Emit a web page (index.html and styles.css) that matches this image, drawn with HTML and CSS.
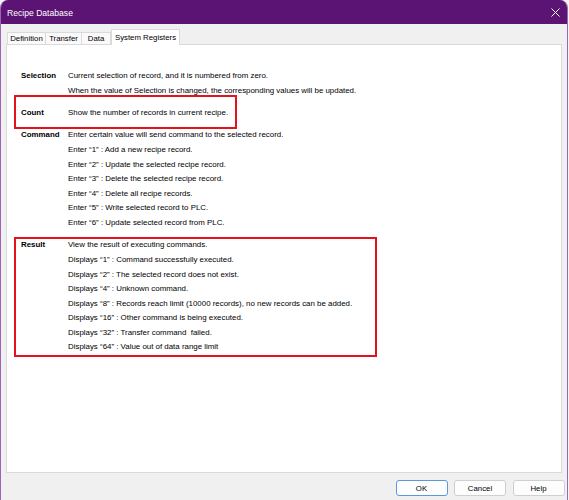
FILE: index.html
```html
<!DOCTYPE html>
<html lang="en">
<head>
    <meta charset="UTF-8">
    <meta name="viewport" content="width=device-width, initial-scale=1.0">
    <title>Recipe Database</title>
    <link rel="stylesheet" href="styles.css">
</head>
<body>
    <div class="window">
        <div class="titlebar">
            <span class="title">Recipe Database</span>
            <span class="close">
                <svg width="9" height="9" viewBox="0 0 9 9">
                    <path d="M0.5 0.5 L8.5 8.5 M8.5 0.5 L0.5 8.5" stroke="#fff" stroke-width="1" fill="none"/>
                </svg>
            </span>
        </div>

        <div class="tabs">
            <div class="tab tab-def">Definition</div>
            <div class="tab tab-transfer">Transfer</div>
            <div class="tab tab-data">Data</div>
            <div class="tab tab-active">System Registers</div>
        </div>

        <div class="panel">
            <div class="reg">
                <div class="reg-name">Selection</div>
                <div class="reg-desc">
                    <p>Current selection of record, and it is numbered from zero.</p>
                    <p>When the value of Selection is changed, the corresponding values will be updated.</p>
                </div>
            </div>

            <div class="reg marked mark-count">
                <div class="reg-name">Count</div>
                <div class="reg-desc">
                    <p>Show the number of records in current recipe.</p>
                </div>
            </div>

            <div class="reg">
                <div class="reg-name">Command</div>
                <div class="reg-desc">
                    <p>Enter certain value will send command to the selected record.</p>
                    <p>Enter “1” : Add a new recipe record.</p>
                    <p>Enter “2” : Update the selected recipe record.</p>
                    <p>Enter “3” : Delete the selected recipe record.</p>
                    <p>Enter “4” : Delete all recipe records.</p>
                    <p>Enter “5” : Write selected record to PLC.</p>
                    <p>Enter “6” : Update selected record from PLC.</p>
                </div>
            </div>

            <div class="reg marked mark-result">
                <div class="reg-name">Result</div>
                <div class="reg-desc">
                    <p>View the result of executing commands.</p>
                    <p>Displays “1” : Command successfully executed.</p>
                    <p>Displays “2” : The selected record does not exist.</p>
                    <p>Displays “4” : Unknown command.</p>
                    <p>Displays “8” : Records reach limit (10000 records), no new records can be added.</p>
                    <p>Displays “16” : Other command is being executed.</p>
                    <p>Displays “32” : Transfer command &nbsp;failed.</p>
                    <p>Displays “64” : Value out of data range limit</p>
                </div>
            </div>
        </div>

        <div class="buttons">
            <button class="btn btn-default">OK</button>
            <button class="btn">Cancel</button>
            <button class="btn">Help</button>
        </div>
    </div>
</body>
</html>
```

FILE: styles.css
```css
*, *::before, *::after {
    box-sizing: border-box;
}
body {
    margin: 0;
    background-color: #f4f4f4;
    font-family: "Liberation Sans", Arial, sans-serif;
    font-size: 7.9px;
    color: #000;
}
.window {
    width: 568px;
    height: 500px;
    background-color: #f0f0f0;
    border-left: 1px solid #9c64b2;
    border-right: 1px solid #9c64b2;
    border-radius: 8px 8px 0 0;
    overflow: hidden;
}
.titlebar {
    height: 24px;
    background-color: #5b1374;
    color: #fff;
    display: flex;
    align-items: center;
    padding: 2px 7px 0 6px;
}
.title {
    font-size: 8.6px;
}
.close {
    margin-left: auto;
    display: flex;
    margin-top: -1px;
}
.tabs {
    display: flex;
    align-items: flex-end;
    height: 15px;
    margin-top: 5px;
    padding-left: 6px;
    position: relative;
    z-index: 1;
}
.tab {
    height: 12px;
    line-height: 11px;
    text-align: center;
    background-color: #fafafa;
    border: 1px solid #dadada;
    border-bottom: none;
    font-size: 7.8px;
}
.tab-def {
    width: 39px;
}
.tab-transfer {
    width: 37px;
    margin-left: -1px;
}
.tab-data {
    width: 30px;
    margin-left: -1px;
}
.tab-active {
    width: 69px;
    height: 16px;
    line-height: 15px;
    margin-bottom: -1px;
    background-color: #fff;
}
.panel {
    height: 429px;
    margin: 0 5px 0 5px;
    background-color: #fff;
    border: 1px solid #dadada;
    padding: 24px 0 0 14px;
}
.reg {
    display: grid;
    grid-template-columns: 47px 1fr;
    line-height: 14.6px;
    margin-bottom: 7.8px;
}
.reg-name {
    font-weight: bold;
}
.reg-desc p {
    margin: 0;
    white-space: nowrap;
}
.marked {
    position: relative;
}
.marked::after {
    content: "";
    position: absolute;
    border: 2px solid #e3121d;
}
.mark-count::after {
    top: -10.7px;
    left: -7px;
    width: 223px;
    height: 33.5px;
}
.mark-result::after {
    top: -1.7px;
    left: -7.5px;
    width: 363px;
    height: 120px;
}
.buttons {
    display: flex;
    justify-content: flex-end;
    gap: 6.5px;
    margin-top: 7px;
    padding-right: 2.5px;
}
.btn {
    width: 52px;
    height: 16px;
    padding: 0;
    font-family: "Liberation Sans", Arial, sans-serif;
    font-size: 7.8px;
    color: #000;
    background-color: #fdfdfd;
    border: 1px solid #d0d0d0;
    border-radius: 3px;
}
.btn-default {
    border: 1.5px solid #5a9ad8;
}
```
